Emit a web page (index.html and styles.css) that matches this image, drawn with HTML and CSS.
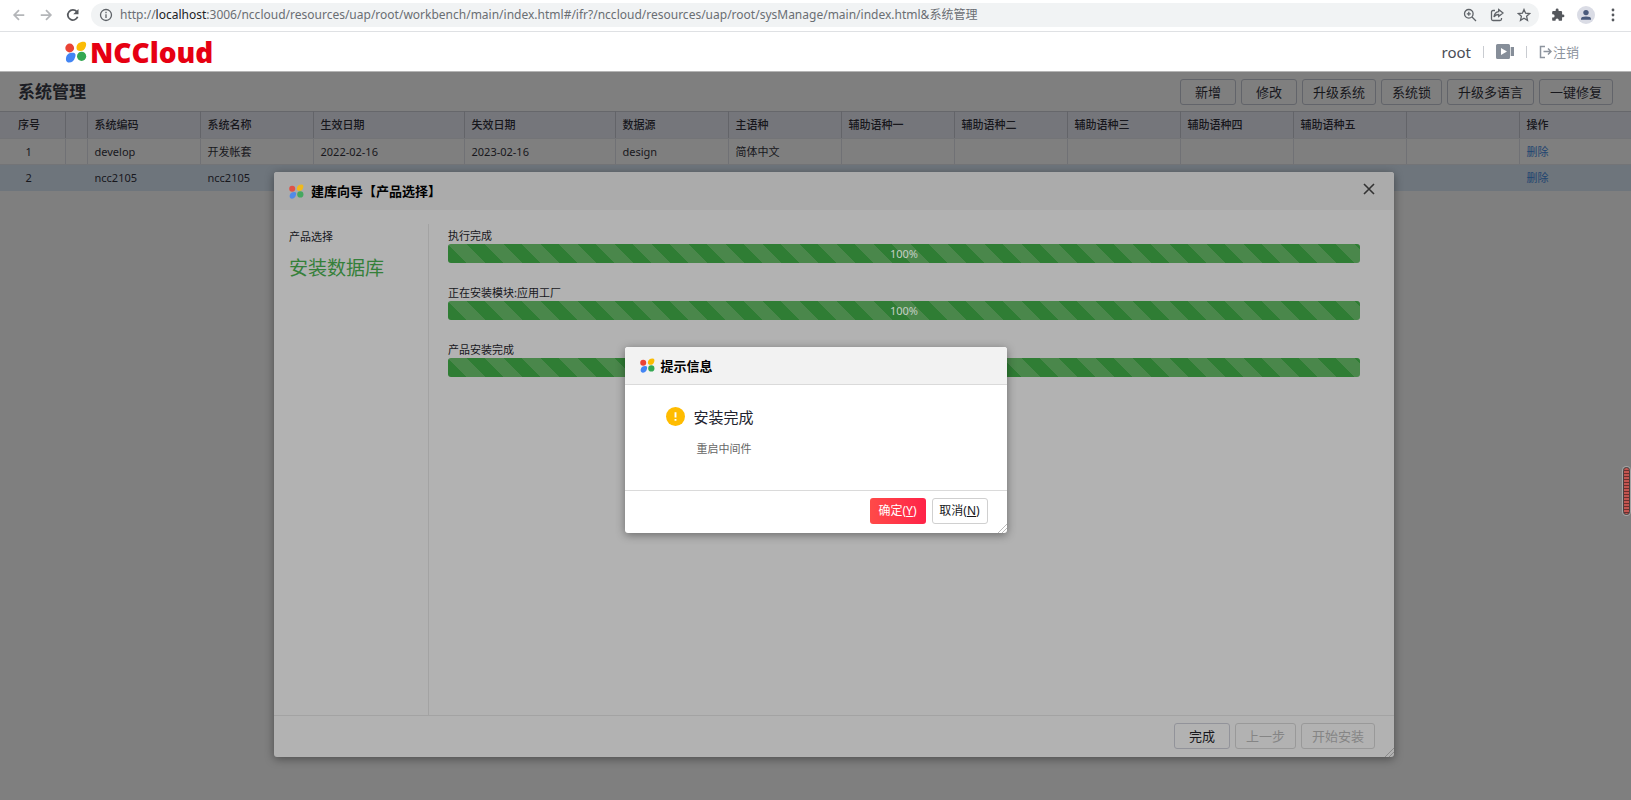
FILE: index.html
```html
<!DOCTYPE html>
<html lang="zh-CN">
<head>
<meta charset="utf-8">
<title>系统管理</title>
<link rel="stylesheet" href="styles.css">
</head>
<body>
<svg class="defs" aria-hidden="true">
  <symbol id="petals" viewBox="0 0 22 22">
    <circle cx="4.700" cy="7" r="4.400" fill="#ea4335"/>
    <path d="M11.500 7C11.500 3 14.500 .8 18.500 .8C21.200 .8 21.600 3 20.800 5.500C19.800 8.800 18 10 15.300 10C12.900 10 11.500 9 11.500 7Z" fill="#fbbc05"/>
    <path d="M1.100 16.500C1.800 13 4.500 11.700 7.500 11.700C10.500 11.700 11 13.500 10.200 16C9.200 19.700 7 21.500 4 21.500C1.300 21.500 .6 19 1.100 16.500Z" fill="#4285f4"/>
    <circle cx="16.600" cy="15.300" r="4.600" fill="#34a853"/>
  </symbol>
</svg>

<div class="browser">
  <button class="nav" aria-label="后退"><svg viewBox="0 0 16 16"><path d="M14 8H3M8 2.500L2.500 8L8 13.500"/></svg></button>
  <button class="nav" aria-label="前进"><svg viewBox="0 0 16 16"><path d="M2 8H13M8 2.500L13.500 8L8 13.500"/></svg></button>
  <button class="nav nav-on" aria-label="刷新"><svg viewBox="0 0 16 16"><path d="M13.300 10A5.800 5.800 0 1 1 12.300 4.200"/><path d="M14.300 1V7H8.300Z" fill="currentColor" stroke="none"/></svg></button>
  <div class="omnibox">
    <svg class="info" viewBox="0 0 14 14"><circle cx="7" cy="7" r="5.500"/><path d="M7 6.300V10M7 3.800V5.200"/></svg>
    <span class="url">http://<b>localhost</b>:3006/nccloud/resources/uap/root/workbench/main/index.html#/ifr?/nccloud/resources/uap/root/sysManage/main/index.html&amp;系统管理</span>
    <svg class="tool" viewBox="0 0 14 14"><circle cx="5.800" cy="5.800" r="4.300"/><path d="M9 9L13 13M3.800 5.800H7.800M5.800 3.800V7.800"/></svg>
    <svg class="tool" viewBox="0 0 14 14"><path d="M5 2.500H3Q1.500 2.500 1.500 4V11Q1.500 12.500 3 12.500H10Q11.500 12.500 11.500 11V10"/><path d="M8.700 1.500L13 5L8.700 8.500V6.500Q5.500 6.500 4 9Q4.500 4 8.700 3.600Z"/></svg>
    <svg class="tool" viewBox="0 0 14 14"><path d="M7 1.500L8.600 5.200L12.700 5.600L9.600 8.300L10.500 12.300L7 10.200L3.500 12.300L4.400 8.300L1.300 5.600L5.400 5.200Z"/></svg>
  </div>
  <svg class="puzzle" viewBox="0 0 24 24"><path d="M20.500 11H19V7a2 2 0 0 0-2-2h-4V3.500a2.500 2.500 0 0 0-5 0V5H4a2 2 0 0 0-2 2v3.800h1.500a2.700 2.700 0 0 1 0 5.400H2V20a2 2 0 0 0 2 2h3.800v-1.500a2.700 2.700 0 0 1 5.400 0V22H17a2 2 0 0 0 2-2v-4h1.500a2.500 2.500 0 0 0 0-5z"/></svg>
  <svg class="avatar" viewBox="0 0 18 18"><circle cx="9" cy="9" r="9" fill="#dadce5"/><circle cx="9" cy="6.600" r="2.700"/><path d="M4 13.700V12.800Q4 10.400 9 10.400Q14 10.400 14 12.800V13.700Z"/></svg>
  <svg class="dots" viewBox="0 0 4 14"><circle cx="2" cy="2" r="1.400"/><circle cx="2" cy="7" r="1.400"/><circle cx="2" cy="12" r="1.400"/></svg>
</div>

<header class="topbar">
  <div class="brand"><svg viewBox="0 0 22 22"><use href="#petals"/></svg><span>NCCloud</span></div>
  <div class="account">
    <span class="user">root</span><i></i>
    <svg class="video" viewBox="0 0 18 15"><path d="M1.500 0H12.500Q14 0 14 1.500V3H18V12H14V13.500Q14 15 12.500 15H1.500Q0 15 0 13.500V1.500Q0 0 1.500 0Z" fill="#868e99"/><path d="M14.500 3V12" stroke="#fff" stroke-width=".7"/><path d="M5 4V11L11 7.500Z" fill="#fff"/></svg><i></i>
    <a class="logout" href="#"><svg viewBox="0 0 13 14"><path d="M6 1.500H1.500V12.500H6M4.500 6.500H12M9 3.500L12 6.500L9 9.500"/></svg>注销</a>
  </div>
</header>

<main class="page">
  <div class="page-head">
    <h1>系统管理</h1>
    <div class="actions">
      <button>新增</button><button>修改</button><button>升级系统</button><button>系统锁</button><button>升级多语言</button><button>一键修复</button>
    </div>
  </div>
  <table class="grid">
    <colgroup><col class="c-no"><col class="c-tick"><col class="c-std"><col class="c-std"><col class="c-date"><col class="c-date"><col class="c-std"><col class="c-std"><col class="c-std"><col class="c-std"><col class="c-std"><col class="c-std"><col class="c-std"><col class="c-std"><col></colgroup>
    <thead><tr><th>序号</th><th></th><th>系统编码</th><th>系统名称</th><th>生效日期</th><th>失效日期</th><th>数据源</th><th>主语种</th><th>辅助语种一</th><th>辅助语种二</th><th>辅助语种三</th><th>辅助语种四</th><th>辅助语种五</th><th></th><th>操作</th></tr></thead>
    <tbody>
      <tr><td>1</td><td></td><td>develop</td><td>开发帐套</td><td>2022-02-16</td><td>2023-02-16</td><td>design</td><td>简体中文</td><td></td><td></td><td></td><td></td><td></td><td></td><td><a href="#">删除</a></td></tr>
      <tr class="selected"><td>2</td><td></td><td>ncc2105</td><td>ncc2105</td><td></td><td></td><td></td><td></td><td></td><td></td><td></td><td></td><td></td><td></td><td><a href="#">删除</a></td></tr>
    </tbody>
  </table>
</main>

<section class="wizard" role="dialog" aria-labelledby="wizard-title">
  <div class="wizard-head">
    <svg class="mark" viewBox="0 0 22 22"><use href="#petals"/></svg>
    <h2 id="wizard-title">建库向导【产品选择】</h2>
    <button class="close" aria-label="关闭"><svg viewBox="0 0 12 12"><path d="M1 1L11 11M11 1L1 11"/></svg></button>
  </div>
  <div class="wizard-body">
    <ol class="steps"><li>产品选择</li><li class="current">安装数据库</li></ol>
    <div class="tasks">
      <div class="task"><p>执行完成</p><div class="bar">100%</div></div>
      <div class="task"><p>正在安装模块:应用工厂</p><div class="bar">100%</div></div>
      <div class="task"><p>产品安装完成</p><div class="bar">100%</div></div>
    </div>
  </div>
  <div class="wizard-foot"><button>完成</button><button disabled>上一步</button><button disabled>开始安装</button></div>
  <svg class="grip" viewBox="0 0 10 10"><path d="M1 10L10 1M5 10L10 5"/></svg>
</section>

<div class="layer">
  <section class="prompt" role="alertdialog" aria-labelledby="prompt-title">
    <div class="prompt-head"><svg class="mark" viewBox="0 0 22 22"><use href="#petals"/></svg><h2 id="prompt-title">提示信息</h2></div>
    <div class="prompt-body">
      <svg class="warn" viewBox="0 0 20 20"><circle cx="10" cy="10" r="10" fill="#ffbc00"/><path d="M10 5.500V11M10 12.500V14.500" stroke="#fff" stroke-width="2"/></svg>
      <div><h3>安装完成</h3><p>重启中间件</p></div>
    </div>
    <div class="prompt-foot"><button class="primary">确定(<u>Y</u>)</button><button>取消(<u>N</u>)</button></div>
    <svg class="grip" viewBox="0 0 10 10"><path d="M1 10L10 1M5 10L10 5"/></svg>
  </section>
</div>
<div class="side-handle"></div>
</body>
</html>
```
FILE: styles.css
```css
* { box-sizing: border-box; }
body {
  margin: 0;
  height: 100vh;
  position: relative;
  overflow: hidden;
  display: flex;
  flex-direction: column;
  background: #7f7f7f;
  color: #17171c;
  font: 11px/16px "Noto Sans", "Noto Sans CJK SC", sans-serif;
}
button { font: inherit; cursor: pointer; }
h1, h2, h3, p, ol { margin: 0; padding: 0; }
svg { display: block; flex: none; fill: none; stroke-linecap: butt; }
.defs { position: absolute; width: 0; height: 0; }

/* browser toolbar */
.browser {
  height: 32px;
  flex: none;
  display: flex;
  align-items: center;
  padding: 0 16px 2px 12px;
  background: #fff;
  border-bottom: 1px solid #dfe1e4;
}
.nav { width: 14px; height: 14px; margin-right: 13px; padding: 0; border: 0; background: none; color: #b4b6b9; }
.nav-on { color: #55585d; margin-right: 11px; }
.nav svg { width: 14px; height: 14px; stroke: currentColor; stroke-width: 2; }
.omnibox {
  flex: 1;
  min-width: 0;
  height: 24px;
  display: flex;
  align-items: center;
  padding: 0 8px;
  border-radius: 12px;
  background: #f1f3f4;
}
.info { width: 14px; height: 14px; margin-right: 7px; stroke: #5f6368; stroke-width: 1.3; }
.url { flex: 1; overflow: hidden; white-space: nowrap; color: #6a6e73; font-size: 12px; }
.url b { font-weight: 400; color: #202124; }
.tool { width: 14px; height: 14px; margin-left: 13px; stroke: #5f6368; stroke-width: 1.3; }
.puzzle { width: 14px; height: 14px; margin-left: 12px; fill: #55585d; }
.avatar { width: 18px; height: 18px; margin-left: 12px; fill: #4b5b7c; }
.dots { width: 4px; height: 14px; margin-left: 16px; fill: #55585d; }

/* product header */
.topbar {
  height: 40px;
  flex: none;
  display: flex;
  align-items: center;
  justify-content: space-between;
  padding: 0 52px 0 65px;
  background: #fff;
  border-bottom: 1px solid #b5b5b5;
}
.brand { display: flex; align-items: center; gap: 3px; color: #e60012; font: 800 28px/32px "Open Sans", sans-serif; }
.brand svg { width: 22px; height: 22px; }
.account { display: flex; align-items: center; font-size: 15px; }
.user { color: #4a4d55; }
.account i { width: 1px; height: 12px; margin: 0 12px; background: #c9ccd1; }
.video { width: 18px; height: 15px; }
.logout { display: flex; align-items: center; gap: 1px; color: #8d949e; font-size: 13px; text-decoration: none; }
.logout svg { width: 13px; height: 14px; stroke: #8d949e; stroke-width: 1.5; }

/* page title and actions */
.page-head { height: 39px; display: flex; align-items: center; justify-content: space-between; padding: 0 18px; }
h1 { font-size: 17px; line-height: 24px; color: #1c1d24; }
.actions { display: flex; gap: 5px; }
.actions button, .wizard-foot button, .prompt-foot button {
  min-width: 56px;
  height: 26px;
  padding: 0 10px;
  border: 1px solid #62646a;
  border-radius: 3px;
  background: none;
  color: #17171c;
  font-size: 13px;
  line-height: 20px;
}

/* data table */
.grid { width: 100%; table-layout: fixed; border-collapse: collapse; }
.c-no { width: 65px; }
.c-tick { width: 22px; }
.c-std { width: 113px; }
.c-date { width: 151px; }
.grid th, .grid td {
  height: 26px;
  padding: 0 7px;
  border-right: 1px solid #707175;
  border-bottom: 1px solid #737477;
  text-align: left;
  font-weight: 400;
  white-space: nowrap;
}
.grid th { height: 27px; background: #75767b; border-right-color: #636469; border-top: 1px solid #66676b; font-weight: 500; }
.grid td { padding-top: 1px; }
.grid td:first-child { text-align: center; padding-right: 14px; }
.grid th:first-child { padding-left: 18px; }
.grid th:last-child, .grid td:last-child { border-right: 0; }
.grid .selected td { background: #6e757c; border-color: #6e757c; }
.grid a { color: #1e4470; text-decoration: none; }

/* wizard dialog */
.wizard {
  position: absolute;
  inset: 172px 237px 43px 274px;
  display: flex;
  flex-direction: column;
  background: #b2b2b2;
  border-radius: 3px;
  box-shadow: 0 2px 10px rgba(0, 0, 0, .4);
}
.wizard-head, .prompt-head { height: 38px; flex: none; display: flex; align-items: center; padding: 0 15px; border-radius: 3px 3px 0 0; }
.wizard-head { background: #ababab; }
.wizard-head .mark { opacity: .85; }
.mark { width: 15px; height: 15px; margin-right: 7px; }
h2 { font-size: 13px; line-height: 20px; color: #000; }
.close { margin: 0 4px 4px auto; padding: 0; border: 0; background: none; }
.close svg { width: 12px; height: 12px; stroke: #333; stroke-width: 1.6; }
.wizard-body { flex: 1; display: flex; padding-top: 14px; }
.steps { width: 155px; padding: 5px 15px; border-right: 1px solid #a3a3a3; list-style: none; }
.steps .current { margin-top: 11px; color: #35803a; font-size: 19px; line-height: 24px; }
.tasks { flex: 1; padding: 4px 34px 0 19px; }
.task { margin-bottom: 22px; }
.bar {
  height: 19px;
  border-radius: 3px;
  background: #2f7d34 linear-gradient(45deg, #4a874b 25%, #2f7d34 25%, #2f7d34 50%, #4a874b 50%, #4a874b 75%, #2f7d34 75%) 0 0 / 37px 37px;
  color: #c5cfc5;
  line-height: 20px;
  text-align: center;
}
.wizard-foot { display: flex; justify-content: flex-end; gap: 5px; padding: 7px 19px 8px; border-top: 1px solid #a3a3a3; }
.wizard-foot button { border-color: #92939a; }
.wizard-foot button:disabled { border-color: #999; color: #858585; }
.grip { position: absolute; right: 0; bottom: 0; width: 10px; height: 10px; stroke: #8a8a8a; }

/* confirmation prompt */
.layer { position: absolute; inset: 80px 0 0; display: flex; align-items: center; justify-content: center; }
.prompt { position: relative; width: 382px; background: #fff; border-radius: 3px; box-shadow: 0 2px 10px rgba(0, 0, 0, .4); }
.prompt-head { background: #f2f2f2; border-bottom: 1px solid #dadada; }
.prompt-head .mark { margin-right: 6px; }
.prompt-body { display: flex; gap: 9px; padding: 22px 41px 0; height: 105px; }
.warn { width: 19px; height: 19px; }
h3 { font-size: 15px; line-height: 20px; font-weight: 400; color: #22232e; }
.prompt-body p { margin: 14px 0 0 3px; color: #666; }
.prompt-foot { display: flex; justify-content: flex-end; gap: 6px; padding: 7px 19px 9px; border-top: 1px solid #dadada; }
.prompt-foot button { padding: 0 6px; border-color: #d0d0d0; font-size: 12px; }
.prompt-foot .primary { border: 0; background: linear-gradient(90deg, #ff4a48, #ff2348); color: #fff; }
.prompt .grip { stroke: #bbb; }

/* side drag handle */
.side-handle {
  position: absolute;
  right: 1px;
  top: 467px;
  width: 7px;
  height: 48px;
  border: 1px solid #4b4040;
  border-radius: 4px;
  background: repeating-linear-gradient(#c35550 0 2px, #6d2f2e 2px 3px);
  box-shadow: 0 0 0 1px #a5a5a5;
}
```
